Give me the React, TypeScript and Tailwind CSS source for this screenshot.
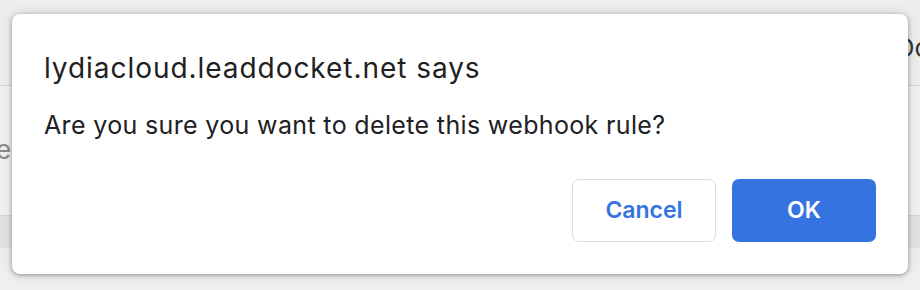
import React from "react";

export default function App() {
  return (
    <div className="relative w-[920px] h-[290px] overflow-hidden bg-[#efefef]" style={{ fontFamily: "Inter, 'Liberation Sans', sans-serif" }}>
      {/* page content behind the dialog */}
      <div className="flex flex-col">
        <div className="h-[85px] bg-[#eeeeee] flex items-start justify-end">
          <span className="mt-[28px] mr-[-10px] text-[26px] text-[#333]">Do</span>
        </div>
        <div className="h-px bg-[#d4d4d4]" />
        <div className="h-[129px] bg-[#f1f1f1] flex items-start">
          <span className="mt-[44px] ml-[-4px] text-[26px] text-[#8a8a8a]">e</span>
        </div>
        <div className="h-px bg-[#d4d4d4]" />
        <div className="h-[32px] bg-[#e3e3e3]" />
        <div className="flex-1" />
      </div>

      {/* dialog */}
      <div className="absolute left-[12px] top-[14px] w-[896px] h-[260px] rounded-[8px] bg-white shadow-[0_1px_4px_rgba(0,0,0,0.35),0_0_14px_rgba(0,0,0,0.12)] flex flex-col px-[32px]">
        <div className="mt-[37px] text-[28px] leading-[34px] tracking-[0.95px] text-[#202124]">lydiacloud.leaddocket.net says</div>
        <div className="mt-[25px] text-[25px] leading-[30px] tracking-[0.35px] text-[#202124]">Are you sure you want to delete this webhook rule?</div>
        <div className="mt-auto mb-[32px] flex justify-end gap-[16px]">
          <button className="w-[144px] h-[63px] rounded-[7px] border border-[#dadce0] bg-white text-[23px] font-semibold text-[#3574e0]">Cancel</button>
          <button className="w-[144px] h-[63px] rounded-[7px] bg-[#3574e0] text-[23px] font-semibold text-white">OK</button>
        </div>
      </div>
    </div>
  );
}
